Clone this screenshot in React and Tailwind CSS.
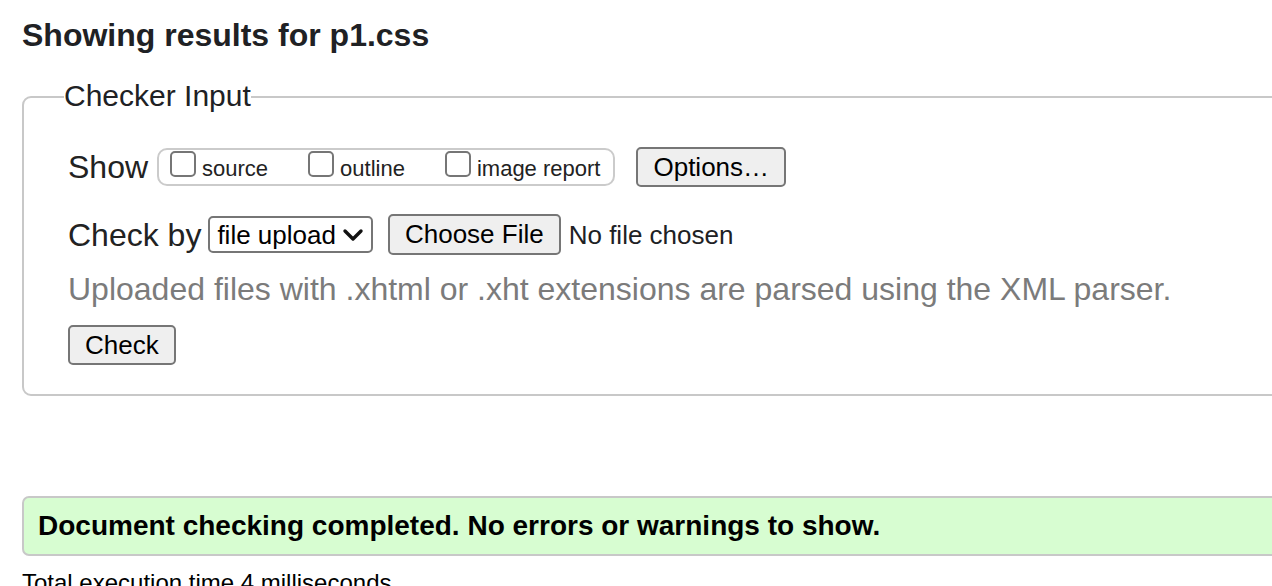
import { useState } from 'react'

const showOptions = [
  { id: 'source', label: 'source' },
  { id: 'outline', label: 'outline' },
  { id: 'image', label: 'image report' },
]

const ChevronDown = () => (
  <svg width="22" height="14" viewBox="0 0 22 14" className="ml-[6px]">
    <polyline points="3,3 11,11 19,3" fill="none" stroke="#111" strokeWidth="3.4" strokeLinecap="round" strokeLinejoin="round" />
  </svg>
)

export default function App() {
  const [checked, setChecked] = useState({ source: false, outline: false, image: false })

  return (
    <div className="h-[586px] w-full overflow-hidden bg-white font-['Liberation_Sans',Arial,sans-serif] text-[#222]">
      <div className="w-[1400px] pl-[22px]">
        <h2 className="pt-[15px] text-[32px] font-bold leading-[40px] text-[#202124]">Showing results for p1.css</h2>

        <fieldset className="mt-[22px] rounded-[9px] border-2 border-[#c8c8c8] pb-[29px] pl-[44px] pt-[30px]">
          <legend className="-ml-[4px] pb-[4px] pt-[2px] text-[30px] leading-[34px] text-[#202124]">Checker Input</legend>

          <div className="flex h-[40px] items-center">
            <span className="text-[32px] leading-[40px]">Show</span>
            <div className="ml-[9px] flex h-[38px] items-center rounded-[10px] border-2 border-[#cbcbcb] pl-[11px] pr-[13px]">
              {showOptions.map((opt, i) => (
                <label key={opt.id} className={`flex items-center ${i > 0 ? 'ml-[40px]' : ''}`}>
                  <input
                    type="checkbox"
                    checked={checked[opt.id]}
                    onChange={() => setChecked((c) => ({ ...c, [opt.id]: !c[opt.id] }))}
                    className="mb-[6px] h-[26px] w-[26px] appearance-none rounded-[5px] border-2 border-[#767676] bg-white"
                  />
                  <span className="ml-[6px] mt-[4px] text-[22px] leading-[22px]">{opt.label}</span>
                </label>
              ))}
            </div>
            <button
              type="button"
              className="ml-[21px] h-[40px] rounded-[5px] border-2 border-[#767676] bg-[#efefef] px-[15px] text-[26px] leading-[34px] text-black"
            >
              Options…
            </button>
          </div>

          <div className="mt-[27px] flex h-[41px] items-center">
            <span className="text-[32px] leading-[40px]">Check by</span>
            <div className="ml-[7px] flex h-[37px] items-center rounded-[5px] border-2 border-[#767676] bg-white pl-[7px] pr-[7px] text-[26px] leading-[32px] text-black">
              file upload
              <ChevronDown />
            </div>
            <button
              type="button"
              className="ml-[15px] h-[41px] rounded-[5px] border-2 border-[#767676] bg-[#efefef] px-[15px] text-[26px] leading-[35px] text-black"
            >
              Choose File
            </button>
            <span className="ml-[8px] text-[26px] leading-[34px] text-[#202124]">No file chosen</span>
          </div>

          <p className="mt-[16px] text-[32px] leading-[36px] text-[#7b7b7b]">
            Uploaded files with .xhtml or .xht extensions are parsed using the XML parser.
          </p>

          <button
            type="button"
            className="mt-[18px] h-[40px] rounded-[5px] border-2 border-[#767676] bg-[#efefef] px-[15px] text-[26px] leading-[34px] text-black"
          >
            Check
          </button>
        </fieldset>

        <div className="mt-[100px] h-[60px] rounded-l-[7px] border-2 border-[#c8c8c8] bg-[#d7fdd1] pl-[14px]">
          <p className="text-[28px] font-bold leading-[56px] text-black">
            Document checking completed. No errors or warnings to show.
          </p>
        </div>

        <p className="mt-[13px] text-[24px] leading-[28px] text-black">Total execution time 4 milliseconds</p>
      </div>
    </div>
  )
}
